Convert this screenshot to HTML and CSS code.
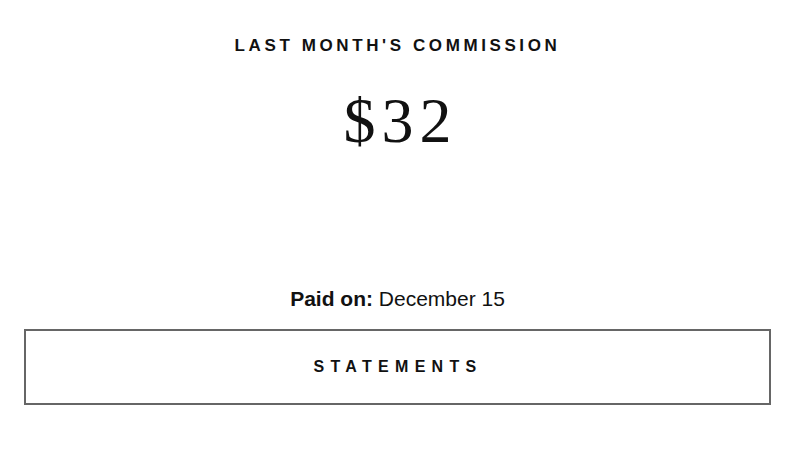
FILE: index.html
```html
<!DOCTYPE html>
<html>
<head>
<meta charset="utf-8">
<link rel="stylesheet" href="styles.css">
</head>
<body>
<main class="card">
  <h2 class="title">LAST MONTH'S COMMISSION</h2>
  <div class="amount">$32</div>
  <p class="paid"><strong>Paid on:</strong> December 15</p>
  <button class="statements">STATEMENTS</button>
</main>
</body>
</html>
```
FILE: styles.css
```css
html, body {
  margin: 0;
  padding: 0;
  background: #fff;
}
.card {
  width: 800px;
  height: 475px;
  box-sizing: border-box;
  padding: 36px 29px 0 24px;
  display: flex;
  flex-direction: column;
  align-items: stretch;
  color: #111;
}
.title {
  margin: 0;
  padding-left: 0;
  text-align: center;
  font-family: "Liberation Sans", Arial, sans-serif;
  font-weight: bold;
  font-size: 17px;
  line-height: 20px;
  letter-spacing: 3.6px;
}
.amount {
  margin-top: 30px;
  padding-left: 6px;
  text-align: center;
  font-family: "Liberation Serif", "Times New Roman", serif;
  font-size: 64px;
  line-height: 70px;
  letter-spacing: 6px;
}
.paid {
  margin: 131px 0 0;
  text-align: center;
  font-family: "Liberation Sans", Arial, sans-serif;
  font-size: 21px;
  line-height: 24px;
}
.paid strong {
  font-weight: bold;
}
.statements {
  margin-top: 18px;
  height: 76px;
  border: 2px solid #666;
  background: #fff;
  font-family: "Liberation Sans", Arial, sans-serif;
  font-weight: bold;
  font-size: 16px;
  letter-spacing: 6.3px;
  padding: 0 0 0 1px;
  color: #111;
}
```
